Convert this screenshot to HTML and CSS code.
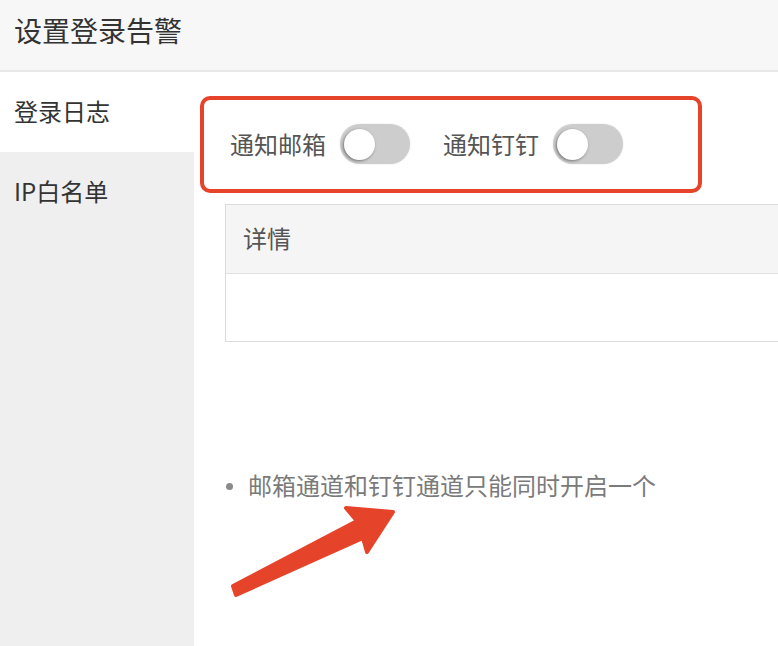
FILE: index.html
```html
<!DOCTYPE html>
<html lang="zh-CN">
<head>
<meta charset="utf-8">
<title>设置登录告警</title>
<link rel="stylesheet" href="styles.css">
</head>
<body>
<div class="page">
  <header class="header">设置登录告警</header>
  <div class="layout">
    <nav class="sidebar">
      <div class="nav-item active">登录日志</div>
      <div class="nav-item">IP白名单</div>
    </nav>
    <main class="main">
      <div class="switches">
        <span class="switch-label">通知邮箱</span>
        <span class="switch"><span class="knob"></span></span>
        <span class="switch-label second">通知钉钉</span>
        <span class="switch"><span class="knob"></span></span>
      </div>
      <div class="table">
        <div class="thead">详情</div>
        <div class="tbody"></div>
      </div>
      <ul class="notes">
        <li>邮箱通道和钉钉通道只能同时开启一个</li>
      </ul>
    </main>
  </div>
  <div class="annot-box"></div>
  <svg class="annot-arrow" width="778" height="646" viewBox="0 0 778 646">
    <path d="M233 586 L357 521 L346 508 L393 512 L367 552 L363 538 L236 595 Z" fill="#e5432a" stroke="#e5432a" stroke-width="4" stroke-linejoin="round"/>
  </svg>
</div>
</body>
</html>
```
FILE: styles.css
```css
* { box-sizing: border-box; }
html, body { margin: 0; padding: 0; }
body {
  width: 778px;
  height: 646px;
  overflow: hidden;
  background: #fff;
  font-family: "Noto Sans CJK SC", "Noto Sans", sans-serif;
  color: #333;
}
.page {
  position: relative;
  width: 778px;
  height: 646px;
  display: flex;
  flex-direction: column;
  overflow: hidden;
}
.header {
  height: 72px;
  flex: none;
  background: #f7f7f7;
  border-bottom: 2px solid #e8e8e8;
  padding-left: 14px;
  font-size: 28px;
  line-height: 61px;
  color: #333;
}
.layout {
  flex: 1;
  display: flex;
  min-height: 0;
}
.sidebar {
  width: 194px;
  flex: none;
  background: #efeff0;
}
.nav-item {
  height: 80px;
  line-height: 78px;
  padding-left: 14px;
  font-size: 24px;
  color: #333;
}
.nav-item.active { background: #fff; }
.main {
  flex: 1;
  min-width: 0;
  padding-left: 31px;
  overflow: hidden;
}
.switches {
  margin-top: 50px;
  height: 44px;
  display: flex;
  align-items: center;
  padding-left: 5px;
}
.switch-label {
  font-size: 24px;
  line-height: 32px;
  color: #555;
  margin-right: 14px;
}
.switch-label.second { margin-left: 33px; }
.switch {
  position: relative;
  width: 70px;
  height: 40px;
  border-radius: 20px;
  background: #cdcdcd;
  box-shadow: 0 0 2px rgba(0,0,0,0.12);
  flex: none;
}
.knob {
  position: absolute;
  left: 4px;
  top: 5px;
  width: 31px;
  height: 31px;
  border-radius: 50%;
  background: #fff;
  box-shadow: -1px 1px 3px rgba(0,0,0,0.45);
}
.table {
  margin-top: 38px;
  width: calc(100% + 20px);
  border: 1px solid #dcdcdc;
}
.thead {
  height: 69px;
  background: #f5f5f5;
  border-bottom: 1px solid #e2e2e2;
  padding-left: 17px;
  font-size: 24px;
  line-height: 66px;
  color: #555;
}
.tbody { height: 67px; }
.notes {
  list-style: none;
  margin: 126px 0 0;
  padding: 0;
}
.notes li {
  position: relative;
  padding-left: 23px;
  font-size: 24px;
  line-height: 34px;
  color: #7a7a7a;
}
.notes li::before {
  content: "";
  position: absolute;
  left: 1px;
  top: 15px;
  width: 7px;
  height: 7px;
  border-radius: 50%;
  background: #8a8a8a;
}
.annot-box {
  position: absolute;
  left: 200px;
  top: 96px;
  width: 502px;
  height: 97px;
  border: 4px solid #e5432a;
  border-radius: 10px;
  pointer-events: none;
}
.annot-arrow {
  position: absolute;
  left: 0;
  top: 0;
  pointer-events: none;
}
```
